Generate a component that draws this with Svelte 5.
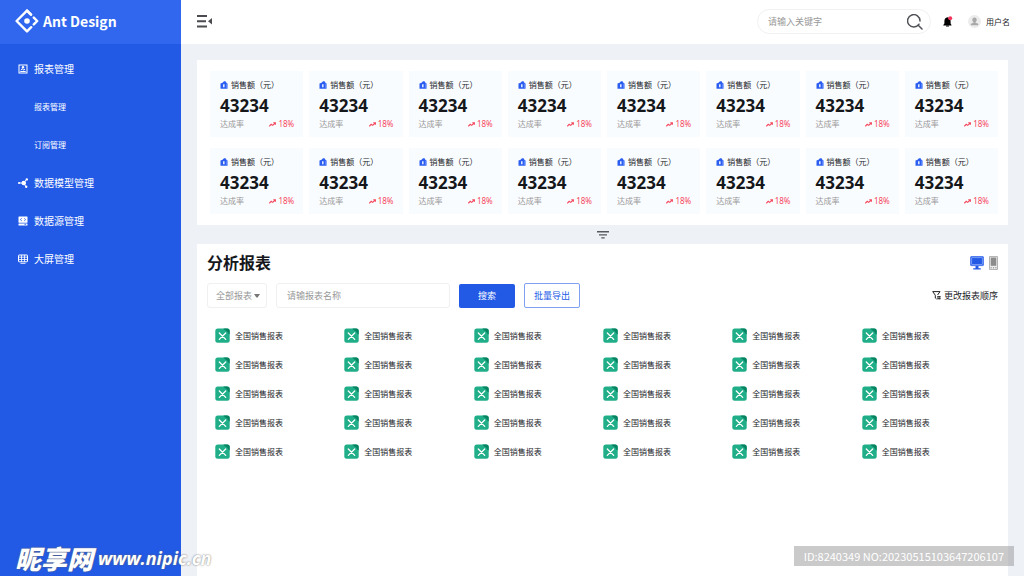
<script lang="ts">
  type MenuItem = {
    label: string;
    icon?: 'report' | 'model' | 'source' | 'screen';
  };

  const menu: MenuItem[] = [
    { label: '报表管理', icon: 'report' },
    { label: '报表管理' },
    { label: '订阅管理' },
    { label: '数据模型管理', icon: 'model' },
    { label: '数据源管理', icon: 'source' },
    { label: '大屏管理', icon: 'screen' },
  ];

  const stats = Array.from({ length: 16 }, () => ({
    label: '销售额（元）',
    value: 43234,
    rate: '18%',
  }));

  const reports = Array.from({ length: 30 }, () => '全国销售报表');

  let keyword = $state('');
  let reportName = $state('');
  let reportType = $state('all');
</script>

<div class="layout">
  <aside class="sidebar">
    <a class="brand" href="#home">
      <svg class="logo" viewBox="0 0 24 24" fill="none" stroke="#fff" stroke-width="2.4">
        <path d="M16 5.6 12 1.600 1.600 12 12 22.400 16.200 18.200" stroke-linejoin="round" stroke-linecap="round" />
        <path d="M12 1.600 16 5.600M18.800 8.600 22.200 12 18.800 15.400" stroke-linejoin="round" stroke-linecap="round" />
        <circle cx="12" cy="12" r="2.8" fill="#fff" stroke="none" />
      </svg>
      <span>Ant Design</span>
    </a>

    <nav>
      {#each menu as item}
        <a class="menu-item" class:sub={!item.icon} href="#menu">
          {#if item.icon}
            <svg class="menu-icon" viewBox="0 0 10 10" fill="none" stroke="#fff">
              {#if item.icon === 'report'}
                <rect x="1" y="1" width="8" height="8" />
                <path d="M2.300 7.500h5.400M3 6.200l1.300-1.600L5.600 6.200 7 5" stroke-width="1" />
                <circle cx="5" cy="3.200" r="1.200" fill="#fff" stroke="none" />
              {:else if item.icon === 'model'}
                <path d="M1 5h5M5.500 4.500 8.700 1.500M5.500 5.500 8 8.500" />
                <circle cx="5.800" cy="5" r="2.300" fill="#fff" stroke="none" />
                <circle cx="1" cy="5" r="1" fill="#fff" stroke="none" />
                <circle cx="8.800" cy="1.400" r="1.200" fill="#fff" stroke="none" />
                <circle cx="8.200" cy="8.700" r="1.200" fill="#fff" stroke="none" />
              {:else if item.icon === 'source'}
                <rect x=".5" y=".5" width="9" height="6.200" rx=".5" fill="#fff" stroke="none" />
                <rect x=".5" y="7.400" width="9" height="2.100" rx=".5" fill="#fff" stroke="none" />
                <path d="M3.800 2.300 2.300 3.600 3.800 4.900M6.200 2.300 7.700 3.600 6.200 4.900M6.500 8.400h1.600" stroke="#225ae6" stroke-width=".8" />
              {:else}
                <rect x=".5" y="1" width="9" height="6.800" rx=".5" />
                <path d="M.5 3.200h9M.5 5.500h9M3.500 1v6.800M6.500 1v6.800M2.500 9.400h5" stroke-width=".8" />
              {/if}
            </svg>
          {/if}
          <span>{item.label}</span>
        </a>
      {/each}
    </nav>
  </aside>

  <div class="page">
    <header class="topbar">
      <button type="button" class="icon-btn" aria-label="收起菜单">
        <svg width="15" height="13" viewBox="0 0 15 13" fill="#4a4c50">
          <path d="M0 0h10v2H0zM0 5.300h9v2H0zM0 10.500h10v2H0zM15 3v6.600L11 6.300z" />
        </svg>
      </button>

      <div class="topbar-right">
        <div class="search">
          <input type="text" placeholder="请输入关键字" aria-label="关键字" bind:value={keyword} />
          <button type="button" class="icon-btn" aria-label="搜索关键字">
            <svg width="16" height="16" viewBox="0 0 16 16" fill="none" stroke="#505257" stroke-width="1.500" stroke-linecap="round">
              <path d="M12 10.200A6.200 6.200 0 1 1 13 6.900M11.500 11.500 15 15" />
            </svg>
          </button>
        </div>
        <button type="button" class="icon-btn bell" aria-label="通知">
          <svg width="10" height="11" viewBox="0 0 10 11">
            <path d="M4.500 1.200C2.400 1.500 1.400 3 1.400 5v2.600L.3 9v.6h8.200V9L7.600 7.600V5c0-2-1-3.500-3.100-3.800z" />
            <path d="M3 9.500h3v1H3z" />
            <circle cx="7.200" cy="2.300" r="2" fill="#f5365c" />
          </svg>
        </button>
        <button type="button" class="user">
          <svg width="13" height="13" viewBox="0 0 13 13">
            <circle cx="6.500" cy="6.500" r="6.500" fill="#ececec" />
            <path d="M6.500 2.400c1.500 0 2.200 1 2.200 2.300 0 1-.5 2-1.200 2.500v.6l2.700 1v1.500H2.800V8.800l2.700-1v-.6c-.7-.5-1.200-1.500-1.200-2.500 0-1.300.7-2.300 2.200-2.300z" fill="#a9a9a9" />
          </svg>
          用户名
        </button>
      </div>
    </header>

    <main>
      <section class="panel stats">
        {#each stats as stat}
          <article class="stat">
            <div class="stat-label">
              <svg width="8" height="8" viewBox="0 0 8 8">
                <path d="M.5 2.400 2.500 1.800 4 .3h1.600l.6 1.300 1.300.8V7.700H.5z" fill="#2a5df0" />
                <path d="M3 3.200h1.600v3H3z" fill="#dce8ff" />
                <path d="M6.700 2.500v5" stroke="#6c93ff" stroke-width=".8" />
              </svg>
              {stat.label}
            </div>
            <div class="stat-value">{stat.value}</div>
            <div class="stat-foot">
              <span>达成率</span>
              <span class="rate">
                <svg width="7" height="5" viewBox="0 0 7 5" fill="none" stroke="#f5485d" stroke-width="1.100">
                  <path d="M.3 4.300 2.200 2.300 3.700 3.400 6.200 1M4.300.8h2.100v1.900" />
                </svg>
                {stat.rate}
              </span>
            </div>
          </article>
        {/each}
      </section>

      <div class="divider">
        <button type="button" class="icon-btn" aria-label="筛选">
          <svg width="12" height="8" viewBox="0 0 12 8" fill="#55585d">
            <path d="M0 0h12v1.400H0zM2 3.200h8v1.300H2zM4.300 6.200h3.400v1.300H4.300z" />
          </svg>
        </button>
      </div>

      <section class="panel reports">
        <div class="title-row">
          <h1>分析报表</h1>
          <div class="devices">
            <button type="button" class="icon-btn" aria-label="电脑">
              <svg width="14" height="14" viewBox="0 0 14 14">
                <rect x=".6" y=".6" width="12.800" height="9" rx=".6" fill="#225ae6" stroke="#4b79f2" stroke-width="1" />
                <rect x="1.800" y="1.800" width="10.400" height="6.600" fill="#225ae6" stroke="#c9d8ff" stroke-width=".5" />
                <path d="M5.500 10h3v2.300h2.300v1.200H3.200v-1.200h2.300z" fill="#225ae6" />
              </svg>
            </button>
            <button type="button" class="icon-btn" aria-label="手机">
              <svg width="9" height="14" viewBox="0 0 9 14">
                <rect x=".4" y=".4" width="8.200" height="13.200" rx=".6" fill="#eee" stroke="#999" stroke-width=".8" />
                <rect x="1.700" y="1.500" width="5.600" height="8.300" fill="#8c8c8c" />
                <path d="M1.500 11.800h1.300M3.900 11.800h1.300M6.200 11.800h1.300" stroke="#888" />
              </svg>
            </button>
          </div>
        </div>

        <div class="toolbar">
          <div class="select">
            <select aria-label="报表类型" bind:value={reportType}>
              <option value="all">全部报表</option>
            </select>
            <svg width="6" height="4" viewBox="0 0 6 4" fill="#777">
              <path d="M0 0h6L3.600 3.400H2.400z" />
            </svg>
          </div>
          <input class="name" type="text" placeholder="请输报表名称" aria-label="报表名称" bind:value={reportName} />
          <button type="button" class="btn primary">搜索</button>
          <button type="button" class="btn outline">批量导出</button>
          <button type="button" class="sort">
            <svg width="9" height="9" viewBox="0 0 9 9" fill="none" stroke="#222" stroke-width="1">
              <path d="M5.600 4 8 .6H.7L3.300 4.200V7l1.300 1M6 5v3.500M7.800 5v3.500" />
              <path d="M5.500 5.500h3M5.500 7.500h3" stroke-width=".7" />
            </svg>
            更改报表顺序
          </button>
        </div>

        <ul class="report-list">
          {#each reports as name}
            <li>
              <a href="#report">
                <svg width="15" height="15" viewBox="0 0 15 15">
                  <rect x=".3" y=".5" width="14.400" height="14.200" rx="2.500" fill="#20ae88" />
                  <path d="M8.500.5H12.200A2.500 2.500 0 0 1 14.700 3v3.500C12.700 5.800 13 3.500 11 2.700 9.800 2.200 9 1.700 8.500.5z" fill="#078362" />
                  <path d="m4.300 5 6.400 6.400M10.700 5l-6.400 6.400" stroke="#fff" stroke-width="1.300" stroke-linecap="round" />
                </svg>
                {name}
              </a>
            </li>
          {/each}
        </ul>
      </section>
    </main>
  </div>

  <div class="mark-left">
    <span class="mark-name">昵享网</span>
    <span class="mark-url">www.nipic.cn</span>
  </div>
  <div class="mark-right">ID:8240349 NO:20230515103647206107</div>
</div>

<style>
  :global(body) {
    margin: 0;
  }

  .layout {
    position: relative;
    display: flex;
    min-height: 100vh;
    overflow: hidden;
    background: #eef1f6;
    color: #222428;
    font-family: 'Noto Sans', 'Noto Sans CJK SC', sans-serif;
    font-size: 8px;
    line-height: 12px;
  }

  svg {
    display: block;
    flex: none;
  }

  a {
    color: inherit;
    text-decoration: none;
  }

  button,
  input,
  select {
    box-sizing: border-box;
    margin: 0;
    padding: 0;
    border: 0;
    background: none;
    color: inherit;
    font: inherit;
    outline: none;
  }

  button {
    cursor: pointer;
  }

  input::placeholder {
    color: #999;
    opacity: 1;
  }

  .sidebar {
    flex: none;
    width: 181px;
    background: #225ae6;
    color: #fff;
  }

  .brand {
    display: flex;
    align-items: center;
    box-sizing: border-box;
    gap: 4px;
    height: 44px;
    padding: 0 0 2px 15px;
    background: #3167ee;
    font-family: 'Noto Sans CJK SC', sans-serif;
    font-size: 14px;
    font-weight: 700;
    line-height: 20px;
  }

  .logo {
    width: 24px;
    height: 24px;
  }

  nav {
    padding-top: 6px;
  }

  .menu-item {
    display: flex;
    align-items: center;
    gap: 6px;
    height: 38px;
    padding-left: 18px;
    font-size: 10px;
  }

  .menu-item.sub {
    padding-left: 34px;
    font-size: 8px;
  }

  .menu-icon {
    width: 10px;
    height: 10px;
  }

  .page {
    display: flex;
    flex: 1;
    flex-direction: column;
    min-width: 0;
  }

  .topbar {
    display: flex;
    align-items: center;
    justify-content: space-between;
    box-sizing: border-box;
    height: 44px;
    padding: 0 14px 1px 16px;
    background: #fff;
  }

  .topbar-right {
    display: flex;
    align-items: center;
  }

  .search {
    display: flex;
    align-items: center;
    box-sizing: border-box;
    width: 174px;
    height: 25px;
    padding: 0 7px 0 10px;
    border: 1px solid #f1f1f1;
    border-radius: 13px;
  }

  .search input {
    flex: 1;
    min-width: 0;
    font-size: 9px;
  }

  .bell {
    margin: 0 15px 0 12px;
  }

  .user {
    display: flex;
    align-items: center;
    gap: 5px;
    white-space: nowrap;
  }

  main {
    display: flex;
    flex: 1;
    flex-direction: column;
    padding: 16px 16px 0;
  }

  .panel {
    background: #fff;
  }

  .stats {
    display: grid;
    grid-template-columns: repeat(8, 1fr);
    gap: 11px 6px;
    padding: 11px 10px 11px 13px;
  }

  .stat {
    box-sizing: border-box;
    padding: 8px 9px 7px 10px;
    background: #f9fcff;
  }

  .stat-label {
    display: flex;
    align-items: center;
    gap: 3px;
    white-space: nowrap;
  }

  .stat-value {
    padding-top: 3px;
    color: #15171b;
    font-size: 17px;
    font-weight: 700;
    line-height: 24px;
  }

  .stat-foot {
    display: flex;
    align-items: center;
    justify-content: space-between;
    color: #999;
  }

  .rate {
    display: flex;
    align-items: center;
    gap: 2px;
    color: #f5485d;
  }

  .divider {
    display: flex;
    align-items: center;
    justify-content: center;
    height: 19px;
  }

  .reports {
    flex: 1;
    padding: 7px 10px 0;
  }

  .title-row {
    display: flex;
    align-items: center;
    justify-content: space-between;
    height: 24px;
  }

  h1 {
    margin: 0;
    color: #15171b;
    font-size: 16px;
    font-weight: 700;
    line-height: 24px;
  }

  .devices {
    display: flex;
    gap: 5px;
  }

  .toolbar {
    display: flex;
    align-items: center;
    margin-top: 8px;
    font-size: 9px;
  }

  .select {
    position: relative;
    flex: none;
    width: 60px;
    margin-right: 9px;
  }

  .select select {
    width: 100%;
    height: 25px;
    padding: 0 8px;
    border: 1px solid #f0f0f0;
    border-radius: 3px;
    color: #999;
    appearance: none;
  }

  .select svg {
    position: absolute;
    top: 11px;
    right: 7px;
    pointer-events: none;
  }

  .name {
    flex: 0 1 174px;
    min-width: 0;
    height: 25px;
    padding: 0 10px;
    border: 1px solid #f0f0f0;
    border-radius: 3px;
  }

  .btn {
    flex: none;
    width: 56px;
    border-radius: 2px;
  }

  .btn.primary {
    height: 24px;
    margin: 0 9px;
    background: #225ae6;
    color: #fff;
  }

  .btn.outline {
    height: 25px;
    border: 1px solid #7f9ff2;
    color: #225ae6;
  }

  .sort {
    display: flex;
    align-items: center;
    gap: 3px;
    margin-left: auto;
    white-space: nowrap;
  }

  .report-list {
    display: grid;
    grid-template-columns: repeat(6, 1fr);
    margin: 13px 7px 0 8px;
    padding: 0;
    list-style: none;
  }

  .report-list a {
    display: flex;
    align-items: center;
    gap: 5px;
    height: 29px;
  }

  .mark-left {
    position: absolute;
    bottom: 4px;
    left: 15px;
    display: flex;
    align-items: center;
    gap: 5px;
    color: #fff;
    font-style: italic;
    font-weight: 700;
    line-height: 28px;
    text-shadow: 0 0 2px #666;
    white-space: nowrap;
  }

  .mark-name {
    font-family: 'Noto Sans CJK SC', sans-serif;
    font-size: 26px;
    font-weight: 900;
  }

  .mark-url {
    font-family: 'Open Sans', 'Noto Sans', sans-serif;
    font-size: 18px;
  }

  .mark-right {
    position: absolute;
    right: 10px;
    bottom: 10px;
    padding: 0 10px;
    background: rgba(150, 150, 150, 0.5);
    color: #fff;
    font-family: 'Noto Sans CJK SC', sans-serif;
    font-size: 11px;
    line-height: 20px;
    white-space: nowrap;
  }
</style>
